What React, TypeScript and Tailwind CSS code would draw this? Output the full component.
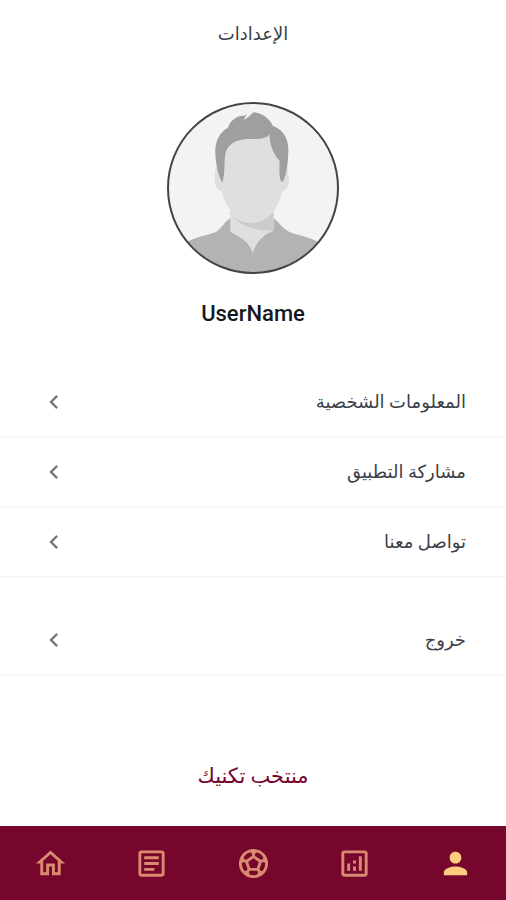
import React from 'react';
import {
    MdChevronLeft,
    MdOutlineAnalytics,
    MdOutlineArticle,
    MdOutlineHome,
    MdOutlineSportsSoccer,
    MdPerson,
} from 'react-icons/md';

const accountLinks = [
    { key: 'profile', label: 'المعلومات الشخصية' },
    { key: 'share', label: 'مشاركة التطبيق' },
    { key: 'contact', label: 'تواصل معنا' },
];

const tabs = [
    { key: 'home', label: 'الرئيسية', icon: MdOutlineHome },
    { key: 'news', label: 'الأخبار', icon: MdOutlineArticle },
    { key: 'matches', label: 'المباريات', icon: MdOutlineSportsSoccer },
    { key: 'stats', label: 'الإحصائيات', icon: MdOutlineAnalytics },
    { key: 'settings', label: 'الإعدادات', icon: MdPerson },
];

function Avatar() {
    return (
        <svg viewBox="0 0 516 516" className="size-43" role="img" aria-label="UserName">
            <defs>
                <clipPath id="avatar-clip">
                    <circle cx="258" cy="258" r="254" />
                </clipPath>
            </defs>
            <g clipPath="url(#avatar-clip)">
                <rect width="516" height="516" fill="#f3f3f3" />
                {/* Shirt */}
                <path d="M40 430C75 406 125 399 148 389C164 378 172 360 190 348H320C335 360 345 378 366 389C395 401 440 406 480 436V516H40Z" fill="#b3b3b3" />
                {/* Neck */}
                <path d="M190 330H320V386C292 396 270 415 257 453C245 415 215 406 190 388Z" fill="#dfdfdf" />
                <path d="M188 330C215 375 295 375 319 325V386C265 388 215 372 188 333Z" fill="#cbcbcb" />
                {/* Face and ears */}
                <path d="M146 200C139 235 143 266 165 268C176 318 205 360 257 361C309 360 336 315 345 268C367 264 370 235 361 200L330 100H180Z" fill="#dfdfdf" />
                {/* Hair */}
                <path d="M166 242C153 221 144 178 145 140C148 108 162 89 183 77C188 58 207 40 232 41L239 36L231 53C244 50 250 36 261 31C286 33 308 51 317 71C346 81 363 106 364 140C364 180 359 219 347 240C337 239 336 213 338 177C321 159 309 134 307 97C302 106 290 110 273 111H235C202 115 178 129 174 163C171 195 174 220 166 242Z" fill="#9f9f9f" />
            </g>
            <circle cx="258" cy="258" r="255" fill="none" stroke="#444444" strokeWidth="6" />
        </svg>
    );
}

function SettingsRow({ label }: { label: string }) {
    return (
        <li className="border-b-2 border-[#f6f6f6]">
            <button type="button" className="flex h-17 w-full items-center justify-between px-10 text-lg text-[#3c3f48]">
                <span>{label}</span>
                <MdChevronLeft className="size-7 text-[#777777]" aria-hidden="true" />
            </button>
        </li>
    );
}

export default function Settings() {
    const [activeTab, setActiveTab] = React.useState('settings');

    return (
        <div dir="rtl" lang="ar" className="flex min-h-screen flex-col bg-white font-['Roboto','DejaVu_Sans',sans-serif]">
            <header className="flex h-17 items-center justify-center">
                <h1 className="text-lg text-[#3c3f48]">الإعدادات</h1>
            </header>

            <main className="flex flex-1 flex-col">
                {/* Profile */}
                <section className="flex flex-col items-center gap-[26px] pt-[34px]">
                    <Avatar />
                    <h2 className="text-[22px] leading-7 font-medium text-[#141821]">UserName</h2>
                </section>

                <ul className="mt-10">
                    {accountLinks.map((item) => (
                        <SettingsRow key={item.key} label={item.label} />
                    ))}
                </ul>
                <ul className="mt-7">
                    <SettingsRow label="خروج" />
                </ul>

                <div className="mt-auto flex justify-center pb-9">
                    <a href="#about" className="text-[21px] leading-7 text-[#76062b]">
                        منتخب تكنيك
                    </a>
                </div>
            </main>

            {/* Bottom navigation */}
            <nav dir="ltr" className="flex h-[74px] bg-[#76062b]">
                {tabs.map(({ key, label, icon: Icon }) => (
                    <button
                        key={key}
                        type="button"
                        aria-label={label}
                        onClick={() => setActiveTab(key)}
                        className={`flex flex-1 items-center justify-center ${
                            activeTab === key ? 'text-[#ffcc80]' : 'text-[#d98a70]'
                        }`}
                    >
                        <Icon className="size-[35px]" />
                    </button>
                ))}
            </nav>
        </div>
    );
}
